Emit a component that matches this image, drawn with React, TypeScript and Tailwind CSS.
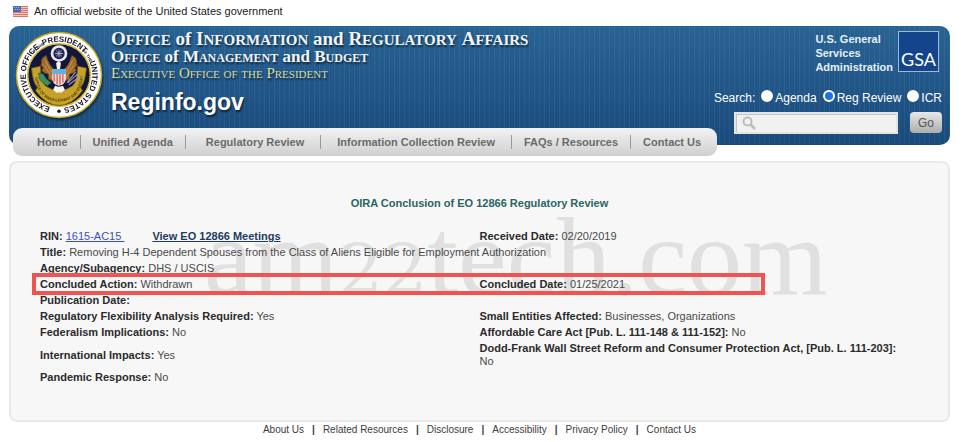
import type { ReactNode } from "react";

const NAV_ITEMS = [
  "Home",
  "Unified Agenda",
  "Regulatory Review",
  "Information Collection Review",
  "FAQs / Resources",
  "Contact Us",
];

const NAV_PADDING = [
  "pl-6 pr-3",
  "pl-3 pr-3",
  "pl-5 pr-4",
  "pl-4 pr-4",
  "pl-3 pr-3",
  "pl-3 pr-4",
];

const FOOTER_LINKS = [
  "About Us",
  "Related Resources",
  "Disclosure",
  "Accessibility",
  "Privacy Policy",
  "Contact Us",
];

const SEARCH_SCOPES = ["Agenda", "Reg Review", "ICR"];

function Flag() {
  return (
    <svg width="15" height="11" viewBox="0 0 15 11" aria-hidden="true">
      <rect width="15" height="11" fill="#f0c3bb" />
      {[0, 2, 4, 6, 8, 10].map((y) => (
        <rect key={y} y={y} width="15" height="1" fill="#d9776c" />
      ))}
      <rect width="8" height="6" fill="#4a6ab0" />
      <g fill="#a9bbe0">
        <rect x="1" y="1" width="1" height="1" />
        <rect x="3" y="1" width="1" height="1" />
        <rect x="5" y="1" width="1" height="1" />
        <rect x="2" y="3" width="1" height="1" />
        <rect x="4" y="3" width="1" height="1" />
        <rect x="6" y="3" width="1" height="1" />
      </g>
    </svg>
  );
}

function Seal() {
  return (
    <svg
      width="88"
      height="88"
      viewBox="0 0 90 90"
      role="img"
      aria-label="Executive Office of the President seal"
      className="shrink-0 drop-shadow-[1px_2px_1px_rgba(0,0,0,0.5)]"
    >
      <defs>
        <path id="ring" d="M45 45 m0 34 a34 34 0 1 1 0 -68 a34 34 0 1 1 0 68" />
        <path id="ribbon" d="M20 43 Q22 72 45 72 Q68 72 70 43" />
      </defs>
      <circle cx="45" cy="45" r="43.500" fill="#fff" stroke="#c9ab2c" strokeWidth="1.500" />
      <circle cx="45" cy="45" r="32" fill="#11163f" stroke="#d6b93a" strokeWidth="1.600" />
      <g
        fontFamily="'Liberation Sans Narrow', 'Liberation Sans', Arial, sans-serif"
        fontWeight="bold"
        fill="#15152b"
      >
        <text fontSize="8">
          <textPath href="#ring" startOffset="9">EXECUTIVE OFFICE</textPath>
        </text>
        <text fontSize="4">
          <textPath href="#ring" startOffset="76">OF THE</textPath>
        </text>
        <text fontSize="8">
          <textPath href="#ring" startOffset="90">PRESIDENT</textPath>
        </text>
        <text fontSize="4">
          <textPath href="#ring" startOffset="132">OF THE</textPath>
        </text>
        <text fontSize="8">
          <textPath href="#ring" startOffset="146">UNITED STATES</textPath>
        </text>
      </g>
      <circle cx="45" cy="82" r="1.800" fill="#15152b" />
      <path
        d="M17 38 L26 36 Q26 51 31 56 Q45 66 59 56 Q64 51 64 36 L73 38 Q72 52 67 58 L69 61 Q58 76 45 76 Q32 76 21 61 L23 58 Q18 52 17 38Z"
        fill="#c6a22b"
        stroke="#7b6110"
        strokeWidth="0.800"
      />
      <text
        fontSize="4"
        fontWeight="bold"
        fontFamily="'Liberation Sans Narrow', 'Liberation Sans', Arial, sans-serif"
        fill="#5b4607"
      >
        <textPath href="#ribbon" startOffset="4">OFFICE OF MANAGEMENT AND BUDGET</textPath>
      </text>
      {/* wings */}
      <path
        d="M42 41 Q35 36 32 25 Q26 27 27 33 Q25 34 29 38 L27 40 Q30 44 34 44 L34 49 Q38 52 42 50Z M48 41 Q55 36 58 25 Q64 27 63 33 Q65 34 61 38 L63 40 Q60 44 56 44 L56 49 Q52 52 48 50Z"
        fill="#a16b2c"
        stroke="#5c3613"
        strokeWidth="0.700"
      />
      <path d="M31 30 L39 45 M30 35 L38 48 M59 30 L51 45 M60 35 L52 48" stroke="#e1b366" strokeWidth="0.600" />
      {/* branch and arrows */}
      <path d="M24 43 l5 1 l3 5 l5 4 l-4 3 l-5 -3 l-3 -4z" fill="#3f8f5a" stroke="#1e5635" strokeWidth="0.600" />
      <path d="M65 43 l-11 10 M62 42 l-9 11 M67 46 l-12 9" stroke="#9a9ab2" strokeWidth="1.100" />
      {/* star cloud */}
      <circle cx="45" cy="23" r="8.500" fill="#e9e9e6" />
      <circle cx="45" cy="23" r="5.800" fill="#23245a" />
      <path d="M45 19v8M41 23h8M42.200 20.200l5.600 5.600M47.800 20.200l-5.600 5.600" stroke="#b9bad2" strokeWidth="0.900" />
      <path d="M42 33 q3 -4 5 0 l-1 6 h-3z" fill="#f5f1e6" />
      {/* shield and tail */}
      <path d="M38 39 h14 v10 q-1 6 -7 7 q-6 -1 -7 -7z" fill="#f3dcd5" />
      <path d="M38 39 h14 v5 h-14z" fill="#5db2df" />
      <path d="M40 44v8M43 44v11M46 44v11M49 44v9" stroke="#d94d49" strokeWidth="1.200" />
      <path d="M41 56 q4 2 8 0 l2 4 l-3 3 h-6 l-3 -3z" fill="#f4f3ee" />
    </svg>
  );
}

function Field({ label, children }: { label: string; children?: ReactNode }) {
  return (
    <>
      <b className="text-[#2b2b2b]">{label}:</b> {children}
    </>
  );
}

function Caps({ children }: { children: string }) {
  return (
    <span className="inline-block text-[15px] leading-4 uppercase first-letter:text-[19px]">
      {children}
    </span>
  );
}

function Masthead() {
  return (
    <div className="flex-1 font-['Liberation_Serif',serif] font-bold text-[#f1f5f8] [text-shadow:1px_2px_2px_rgba(0,0,0,0.6)]">
      <p className="text-[19px] leading-4">
        <Caps>Office</Caps> of <Caps>Information</Caps> and <Caps>Regulatory</Caps> <Caps>Affairs</Caps>
      </p>
      <p className="mt-px text-[17px] leading-4 [font-variant-caps:small-caps]">
        Office <span className="[font-variant-caps:normal]">of</span> Management{" "}
        <span className="[font-variant-caps:normal]">and</span> Budget
      </p>
      <p className="text-[15px] leading-4 font-normal text-[#d9dba0] [font-variant-caps:small-caps]">
        Executive Office of the President
      </p>
      <h1 className="mt-[9px] font-['Liberation_Sans',Arial,sans-serif] text-[23px] leading-6 text-white">
        Reginfo.gov
      </h1>
    </div>
  );
}

function SearchPanel() {
  return (
    <div className="flex flex-col items-end">
      <div className="mr-[3px] flex gap-[5px] text-white">
        <p className="pt-px text-[11px] leading-[14px] font-bold text-[#e6eff6]">
          U.S. General
          <br />
          Services
          <br />
          Administration
        </p>
        <div className="flex h-[41px] w-[41px] items-end justify-center border border-[#9db9d6] bg-[#14448c] pb-[2px] font-['Lato',sans-serif] text-[18px] leading-5 text-white">
          GSA
        </div>
      </div>
      <form className="mt-4" onSubmit={(e) => e.preventDefault()}>
        <fieldset className="flex items-center text-[12px] leading-4 text-white">
          <legend className="float-left">Search:</legend>
          {SEARCH_SCOPES.map((scope) => (
            <label key={scope} className="ml-[6px] flex items-center gap-[2px]">
              <input
                type="radio"
                name="scope"
                defaultChecked={scope === "Reg Review"}
                className="mb-1 h-3 w-3 appearance-none rounded-full border-2 border-white bg-white checked:bg-[#1f6fe5]"
              />
              {scope}
            </label>
          ))}
        </fieldset>
        <div className="mt-[6px] flex justify-end gap-3">
          <div className="flex h-[22px] w-[164px] items-center border-2 border-[#e4e4e4] bg-[#f1f1f2] pl-[6px] shadow-[inset_1px_1px_0_#c4c4c4]">
            <svg width="14" height="14" viewBox="0 0 14 14" fill="none" stroke="#bcbcbc" aria-hidden="true">
              <circle cx="5.500" cy="5.500" r="4" strokeWidth="2" />
              <path d="M8.500 8.500 L13 13" strokeWidth="2.600" />
            </svg>
            <input aria-label="Search" type="text" className="h-4 min-w-0 flex-1 bg-transparent px-1 text-[12px] text-black outline-none" />
          </div>
          <button
            type="submit"
            className="h-[21px] w-8 rounded-[4px] bg-linear-to-b from-[#e8e8e8] to-[#adadad] text-[12px] leading-4 text-[#555]"
          >
            Go
          </button>
        </div>
      </form>
    </div>
  );
}

export default function App() {
  return (
    <div className="bg-white pr-5 pl-[9px] font-['Liberation_Sans',Arial,sans-serif] text-[11px] text-[#4a4a4a]">
      <p className="flex h-[26px] items-center gap-[6px] pb-[3px] pl-1 text-[11px] text-[#222]">
        <Flag />
        An official website of the United States government
      </p>

      <header>
        <div className="rounded-[10px] bg-[#1f5688] bg-[repeating-linear-gradient(90deg,rgba(255,255,255,0.05)_0_1px,transparent_1px_5px),linear-gradient(#286394,#1a4a7c)]">
          <div className="flex h-[119px] items-start pt-[5px] pr-2 pl-[6px]">
            <Seal />
            <div className="flex flex-1 pl-2">
              <Masthead />
              <SearchPanel />
            </div>
          </div>
        </div>
        <nav className="relative -mt-[17px] ml-1 w-fit rounded-[9px] bg-linear-to-b from-[#f3f3f3] to-[#cfcfcf]">
          <ul className="flex h-7 items-center text-[11px] font-bold text-[#6a6a6a]">
            {NAV_ITEMS.map((item, i) => (
              <li key={item} className={i ? "border-l border-[#999]" : ""}>
                <a href="#" className={`block leading-[14px] ${NAV_PADDING[i]}`}>
                  {item}
                </a>
              </li>
            ))}
          </ul>
        </nav>
      </header>

      <main className="relative mt-[5px] rounded-[8px] border-2 border-[#e9e9e9] bg-[#f7f7f7] px-[29px] pt-8 pb-[34px]">
        <div
          aria-hidden="true"
          className="absolute top-[34px] left-[193px] font-['Liberation_Serif',serif] text-[110px] leading-[120px] whitespace-nowrap text-[#e0e0e0] select-none"
        >
          am<span className="font-['DejaVu_Serif',serif] text-[70px]">22</span>tech.com
        </div>
        <div className="relative">
          <h2 className="text-center text-[11px] leading-4 font-bold text-[#2c6462]">
            OIRA Conclusion of EO 12866 Regulatory Review
          </h2>
          <table className="mt-[17px] w-full table-fixed border-separate border-spacing-x-0 border-spacing-y-px text-left text-[11px] leading-[13px] [&_td]:py-px [&_td]:pr-3">
            <tbody>
              <tr>
                <td>
                  <Field label="RIN">
                    <a href="#" className="mr-7 whitespace-pre text-[#3b50c4] underline">{"1615-AC15 "}</a>
                  </Field>
                  <a href="#" className="font-bold text-[#1d3c63] underline">View EO 12866 Meetings</a>
                </td>
                <td><Field label="Received Date">02/20/2019</Field></td>
              </tr>
              <tr>
                <td colSpan={2}>
                  <Field label="Title">
                    Removing H-4 Dependent Spouses from the Class of Aliens Eligible for Employment Authorization
                  </Field>
                </td>
              </tr>
              <tr>
                <td colSpan={2}><Field label="Agency/Subagency">DHS / USCIS</Field></td>
              </tr>
              <tr>
                <td className="relative">
                  <Field label="Concluded Action">Withdrawn</Field>
                  <span className="pointer-events-none absolute -top-1 -left-2 h-[22px] w-[733px] border-4 border-[#f05350]" />
                </td>
                <td><Field label="Concluded Date">01/25/2021</Field></td>
              </tr>
              <tr>
                <td colSpan={2}><Field label="Publication Date" /></td>
              </tr>
              <tr>
                <td><Field label="Regulatory Flexibility Analysis Required">Yes</Field></td>
                <td><Field label="Small Entities Affected">Businesses, Organizations</Field></td>
              </tr>
              <tr>
                <td><Field label="Federalism Implications">No</Field></td>
                <td><Field label="Affordable Care Act [Pub. L. 111-148 & 111-152]">No</Field></td>
              </tr>
              <tr>
                <td><Field label="International Impacts">Yes</Field></td>
                <td>
                  <Field label="Dodd-Frank Wall Street Reform and Consumer Protection Act, [Pub. L. 111-203]">No</Field>
                </td>
              </tr>
              <tr>
                <td colSpan={2}><Field label="Pandemic Response">No</Field></td>
              </tr>
            </tbody>
          </table>
        </div>
      </main>

      <footer className="flex justify-center pt-[2px] text-[10px] leading-3 text-[#3c3c3c]">
        {FOOTER_LINKS.map((link, i) => (
          <span key={link} className="flex">
            {i > 0 && <span className="px-2 font-bold">|</span>}
            <a href="#">{link}</a>
          </span>
        ))}
      </footer>
    </div>
  );
}
